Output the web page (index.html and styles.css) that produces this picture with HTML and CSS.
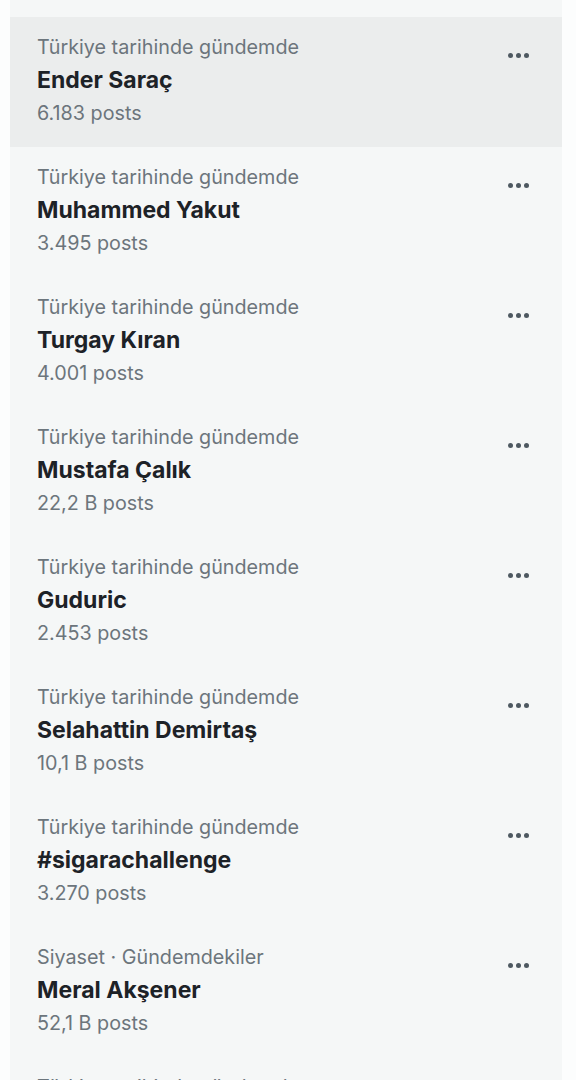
FILE: index.html
```html
<!DOCTYPE html>
<html lang="tr">

<head>
    <meta charset="UTF-8" />
    <meta name="viewport" content="width=device-width, initial-scale=1" />
    <title>Gündem</title>
    <link rel="stylesheet" href="styles.css">
</head>

<body>
    <div class="trends">

        <div class="trend active">
            <div class="trend-text">
                <span class="trend-cat">Türkiye tarihinde gündemde</span>
                <span class="trend-name">Ender Saraç</span>
                <span class="trend-count">6.183 posts</span>
            </div>
            <div class="more"><span></span><span></span><span></span></div>
        </div>

        <div class="trend">
            <div class="trend-text">
                <span class="trend-cat">Türkiye tarihinde gündemde</span>
                <span class="trend-name">Muhammed Yakut</span>
                <span class="trend-count">3.495 posts</span>
            </div>
            <div class="more"><span></span><span></span><span></span></div>
        </div>

        <div class="trend">
            <div class="trend-text">
                <span class="trend-cat">Türkiye tarihinde gündemde</span>
                <span class="trend-name">Turgay Kıran</span>
                <span class="trend-count">4.001 posts</span>
            </div>
            <div class="more"><span></span><span></span><span></span></div>
        </div>

        <div class="trend">
            <div class="trend-text">
                <span class="trend-cat">Türkiye tarihinde gündemde</span>
                <span class="trend-name">Mustafa Çalık</span>
                <span class="trend-count">22,2 B posts</span>
            </div>
            <div class="more"><span></span><span></span><span></span></div>
        </div>

        <div class="trend">
            <div class="trend-text">
                <span class="trend-cat">Türkiye tarihinde gündemde</span>
                <span class="trend-name">Guduric</span>
                <span class="trend-count">2.453 posts</span>
            </div>
            <div class="more"><span></span><span></span><span></span></div>
        </div>

        <div class="trend">
            <div class="trend-text">
                <span class="trend-cat">Türkiye tarihinde gündemde</span>
                <span class="trend-name">Selahattin Demirtaş</span>
                <span class="trend-count">10,1 B posts</span>
            </div>
            <div class="more"><span></span><span></span><span></span></div>
        </div>

        <div class="trend">
            <div class="trend-text">
                <span class="trend-cat">Türkiye tarihinde gündemde</span>
                <span class="trend-name">#sigarachallenge</span>
                <span class="trend-count">3.270 posts</span>
            </div>
            <div class="more"><span></span><span></span><span></span></div>
        </div>

        <div class="trend">
            <div class="trend-text">
                <span class="trend-cat">Siyaset · Gündemdekiler</span>
                <span class="trend-name">Meral Akşener</span>
                <span class="trend-count">52,1 B posts</span>
            </div>
            <div class="more"><span></span><span></span><span></span></div>
        </div>

        <div class="trend">
            <div class="trend-text">
                <span class="trend-cat">Türkiye tarihinde gündemde</span>
            </div>
        </div>

    </div>
</body>

</html>
```

FILE: styles.css
```css
* {
    box-sizing: border-box;
    margin: 0;
    padding: 0;
}

body {
    font-family: Inter, "Noto Sans", sans-serif;
    background-color: #fcfdfd;
    color: #1d2227;
    height: 1080px;
    overflow: hidden;
}

.trends {
    margin-left: 10px;
    width: 552px;
    background: #f5f7f7;
    padding-top: 17px;
}

.trend {
    height: 130px;
    display: flex;
    justify-content: space-between;
    align-items: flex-start;
    padding: 14px 33px 0 27px;
}

.trend.active {
    background: #ebeded;
}

.trend-text {
    display: flex;
    flex-direction: column;
}

.trend-cat,
.trend-count {
    font-size: 19.75px;
    line-height: 33px;
    color: #6c757c;
}

.trend-name {
    font-size: 23px;
    line-height: 33px;
    font-weight: 700;
    color: #1d2227;
}

.more {
    display: flex;
    gap: 3px;
    margin-top: 22px;
}

.more span {
    width: 5px;
    height: 5px;
    border-radius: 50%;
    background: #4e5961;
}
```
